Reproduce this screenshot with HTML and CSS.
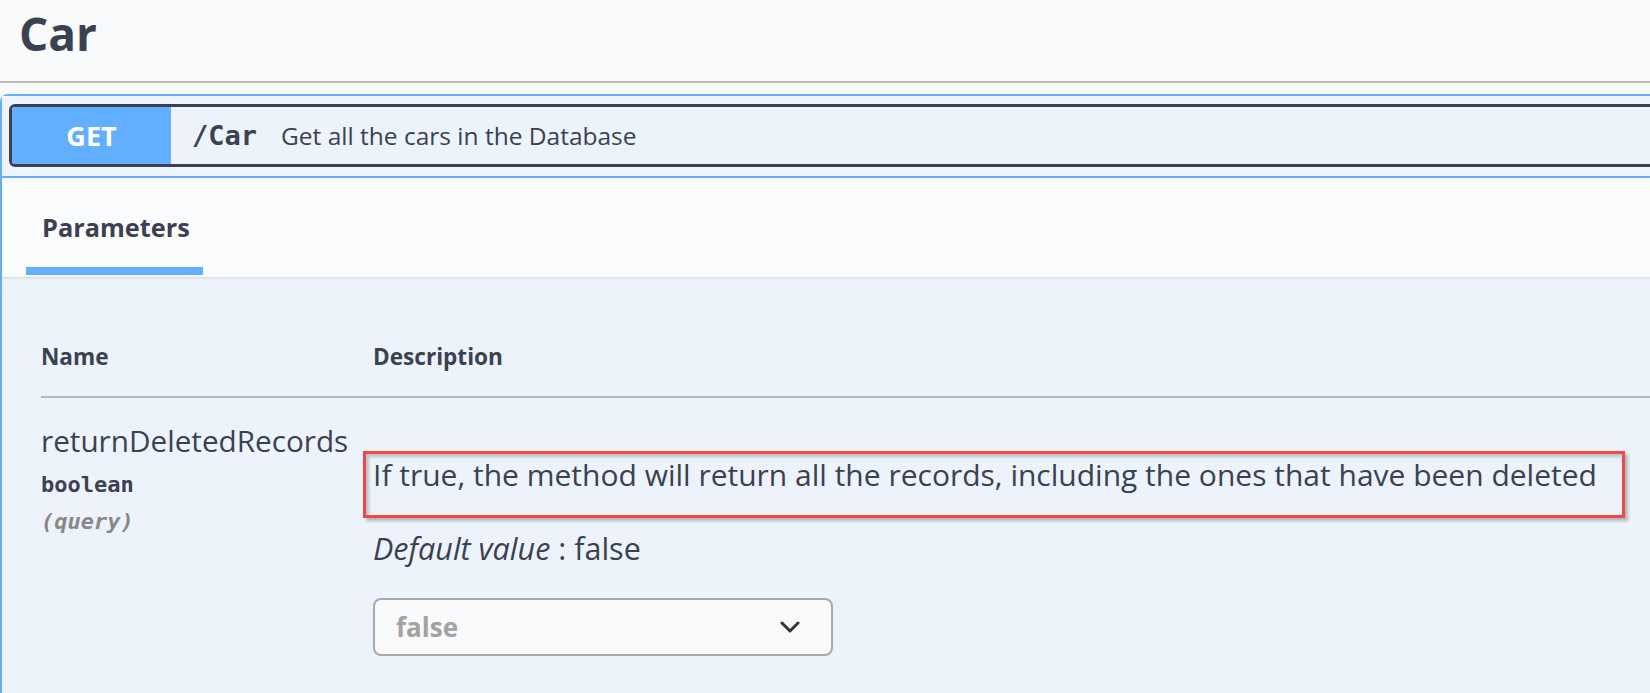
FILE: index.html
```html
<!DOCTYPE html>
<html lang="en">
<head>
<meta charset="utf-8">
<title>Car</title>
<link rel="stylesheet" href="styles.css">
</head>
<body>
<div class="page">
  <h3 class="tag">Car</h3>
  <div class="opblock">
    <div class="summary">
      <div class="control">
        <span class="method">GET</span>
        <span class="path">/Car</span>
        <span class="summary-desc">Get all the cars in the Database</span>
      </div>
    </div>
    <div class="tab-header">
      <div class="tab">
        <div class="tab-label">Parameters</div>
        <div class="tab-line"></div>
      </div>
    </div>
    <div class="params">
      <div class="params-head">
        <div class="col-name">Name</div>
        <div class="col-desc">Description</div>
      </div>
      <div class="param-row">
        <div class="col-name">
          <div class="pname">returnDeletedRecords</div>
          <div class="ptype">boolean</div>
          <div class="pin">(query)</div>
        </div>
        <div class="col-desc">
          <div class="highlight">If true, the method will return all the records, including the ones that have been deleted</div>
          <div class="default"><i>Default value</i> : false</div>
          <div class="select">
            <span class="select-value">false</span>
            <svg class="chevron" width="20" height="12" viewBox="0 0 20 12"><polyline points="2,2 10,10 18,2" fill="none" stroke="#333" stroke-width="3" stroke-linecap="round" stroke-linejoin="round"/></svg>
          </div>
        </div>
      </div>
    </div>
  </div>
</div>
</body>
</html>
```
FILE: styles.css
```css
html, body {
  margin: 0;
  padding: 0;
}
body {
  background: #f8fafc;
  font-family: "Open Sans", "Noto Sans", sans-serif;
  color: #3b4151;
  overflow: hidden;
  width: 1650px;
  height: 693px;
}
.page {
  width: 1650px;
}
.tag {
  margin: 0;
  padding: 3px 0 18px 19px;
  font-size: 46px;
  line-height: 60px;
  font-weight: 700;
  color: #3b4151;
  border-bottom: 2px solid #bcbcbc;
}
.opblock {
  margin-top: 11px;
  width: 1700px;
  border: 2px solid #61affe;
  border-radius: 8px;
  background: #ecf3fb;
}
.summary {
  padding: 8px 0 9px 7px;
  border-bottom: 2px solid #61affe;
  background: #edf4fc;
}
.control {
  display: flex;
  align-items: center;
  height: 57px;
  border: 3px solid #3b4151;
  border-radius: 6px;
  background: #ebf3fb;
}
.method {
  width: 159px;
  height: 57px;
  display: flex;
  align-items: center;
  justify-content: center;
  background: #61affe;
  color: #fff;
  font-weight: 700;
  font-size: 27px;
  border-radius: 3px 0 0 3px;
}
.path {
  margin-left: 21px;
  font-family: "DejaVu Sans Mono", monospace;
  font-weight: 700;
  font-size: 27px;
}
.summary-desc {
  margin-left: 24px;
  font-size: 24.5px;
}
.tab-header {
  background: #fbfcfe;
  padding: 0 0 2px 24px;
  box-shadow: 0 1px 2px rgba(0, 0, 0, 0.12);
  position: relative;
}
.tab {
  display: inline-block;
  width: 177px;
  padding-top: 31px;
}
.tab-label {
  padding-left: 16px;
  font-size: 25.3px;
  line-height: 36px;
  font-weight: 700;
}
.tab-line {
  margin-top: 22px;
  height: 8px;
  background: #61affe;
}
.params {
  padding: 65px 0 60px 39px;
}
.params-head {
  display: grid;
  grid-template-columns: 332px 1fr;
  font-size: 22.6px;
  line-height: 30px;
  font-weight: 700;
  padding-bottom: 24px;
  border-bottom: 2px solid #b9b9b9;
}
.param-row {
  display: grid;
  grid-template-columns: 332px 1fr;
  padding-top: 25px;
}
.pname {
  font-size: 29.7px;
  line-height: 36px;
}
.ptype {
  margin-top: 12px;
  font-family: "DejaVu Sans Mono", monospace;
  font-weight: 700;
  font-size: 22px;
  line-height: 28px;
}
.pin {
  margin-top: 9px;
  font-family: "DejaVu Sans Mono", monospace;
  font-weight: 700;
  font-style: italic;
  font-size: 22px;
  line-height: 28px;
  color: #888888;
}
.highlight {
  box-sizing: border-box;
  margin-top: 28px;
  margin-left: -10px;
  width: 1262px;
  height: 67px;
  padding: 3px 0 0 7px;
  border: 3px solid #f04848;
  font-size: 30px;
  line-height: 36px;
  white-space: nowrap;
  box-shadow: 3px 3px 3px rgba(0, 0, 0, 0.25), inset 3px 3px 3px rgba(0, 0, 0, 0.2);
}
.default {
  margin-top: 12px;
  font-size: 30.5px;
  line-height: 36px;
}
.select {
  box-sizing: border-box;
  margin-top: 32px;
  width: 460px;
  height: 58px;
  border: 2px solid #a9a9a9;
  border-radius: 8px;
  background: #f7f9fb;
  display: flex;
  align-items: center;
  justify-content: space-between;
  padding: 0 31px 0 21px;
}
.select-value {
  font-size: 26px;
  font-weight: 700;
  color: #a2a2a2;
}
.chevron {
  display: block;
}
```
